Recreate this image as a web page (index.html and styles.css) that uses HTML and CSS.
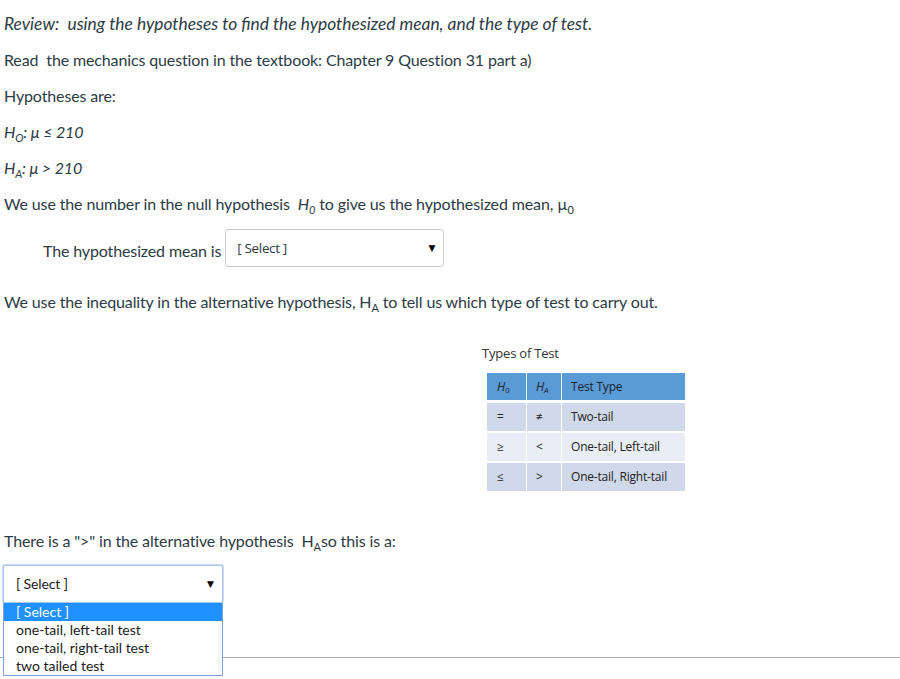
FILE: index.html
```html
<!DOCTYPE html>
<html>
<head>
<meta charset="utf-8">
<link rel="stylesheet" href="styles.css">
</head>
<body>
<div class="page">
  <p class="title">Review:&nbsp; using the hypotheses to find the hypothesized mean, and the type of test.</p>
  <p>Read&nbsp; the mechanics question in the textbook: Chapter 9 Question 31 part a)</p>
  <p>Hypotheses are:</p>
  <p class="hyp"><i>H<sub>O</sub>: μ ≤ 210</i></p>
  <p class="hyp"><i>H<sub>A</sub>: μ &gt; 210</i></p>
  <p>We use the number in the null hypothesis&nbsp; <i>H<sub>0</sub></i> to give us the hypothesized mean, µ<sub>0</sub></p>
  <p class="indent"><span class="label">The hypothesized mean is&nbsp;</span><span class="select sel1"><span class="sel-text">[ Select ]</span><span class="arrow">▼</span></span></p>
  <p class="gap">We use the inequality in the alternative hypothesis, H<sub>A</sub> to tell us which type of test to carry out.</p>
  <div class="figure">
    <div class="fig-title">Types of Test</div>
    <div class="tbl">
      <div class="row head"><div class="c1"><i>H<sub>0</sub></i></div><div class="c2"><i>H<sub>A</sub></i></div><div class="c3">Test Type</div></div>
      <div class="row dark"><div class="c1">=</div><div class="c2">≠</div><div class="c3">Two-tail</div></div>
      <div class="row light"><div class="c1">≥</div><div class="c2">&lt;</div><div class="c3">One-tail, Left-tail</div></div>
      <div class="row dark"><div class="c1">≤</div><div class="c2">&gt;</div><div class="c3">One-tail, Right-tail</div></div>
    </div>
  </div>
  <p class="q2">There is a "&gt;" in the alternative hypothesis&nbsp; H<sub>A</sub>so this is a:</p>
  <div class="sel2-wrap">
    <div class="select sel2"><span class="sel-text">[ Select ]</span><span class="arrow">▼</span></div>
    <ul class="dropdown">
      <li class="active">[ Select ]</li>
      <li>one-tail, left-tail test</li>
      <li>one-tail, right-tail test</li>
      <li>two tailed test</li>
    </ul>
  </div>
  <hr class="rule">
</div>
</body>
</html>
```
FILE: styles.css
```css
html, body {
  margin: 0;
  padding: 0;
  background: #fff;
}
.page {
  font-family: Lato, "Open Sans", sans-serif;
  font-size: 16px;
  line-height: 24px;
  letter-spacing: -0.13px;
  color: #2d3b45;
  padding: 0 4px;
  display: flow-root;
}
p {
  margin: 12px 0;
}
.title {
  font-style: italic;
  font-size: 17.4px;
  letter-spacing: 0;
}
sub {
  font-size: 11px;
  line-height: 0;
  vertical-align: -4px;
}
.indent {
  display: flex;
  align-items: center;
  padding-left: 39px;
  margin-top: 13px;
  margin-bottom: 23px;
}
.label {
  padding-top: 6px;
}
.select {
  display: inline-flex;
  align-items: center;
  justify-content: space-between;
  box-sizing: border-box;
  background: #fff;
}
.sel1 {
  width: 219px;
  height: 38px;
  border: 1px solid #c7cdd1;
  border-radius: 3px;
  padding: 0 8px 0 11px;
  font-family: "Open Sans", sans-serif;
  font-size: 13.5px;
  letter-spacing: -0.35px;
  color: #2d3b45;
}
.arrow {
  font-size: 9px;
  color: #000;
  font-family: "DejaVu Sans", sans-serif;
  letter-spacing: 0;
}
.figure {
  margin: 30px 0 0 478px;
  width: 210px;
  height: 163px;
}
.fig-title {
  font-family: "Open Sans", sans-serif;
  font-size: 13px;
  line-height: 18px;
  color: #333;
  letter-spacing: -0.2px;
}
.tbl {
  margin: 11px 0 0 5px;
  display: flex;
  flex-direction: column;
  gap: 2px;
  width: 198px;
  font-family: "Open Sans", sans-serif;
  font-size: 12px;
  letter-spacing: -0.2px;
  color: #222;
}
.row {
  display: grid;
  grid-template-columns: 39px 34px 123px;
  column-gap: 1px;
  height: 28px;
}
.row.head {
  height: 27px;
  margin-bottom: 1px;
}
.row > div {
  display: flex;
  align-items: center;
  padding-left: 10px;
}
.row .c2 { padding-left: 9px; }
.row .c3 { padding-left: 9px; }
.head > div { background: #5b9bd5; color: #1a2230; }
.dark > div { background: #d0d9ea; }
.light > div { background: #e9edf5; }
.tbl sub {
  font-size: 8px;
  vertical-align: -2px;
}
.q2 {
  margin-top: 22px;
  margin-bottom: 12px;
}
.sel2-wrap {
  position: relative;
  width: 220px;
  margin-left: -1px;
  z-index: 2;
}
.sel2 {
  width: 220px;
  height: 38px;
  border: 1px solid #a8c3ee;
  border-radius: 2px;
  box-shadow: 0 0 0 1px #c9dbf7;
  padding: 0 8px 0 12px;
  font-size: 14px;
  color: #1b1b1b;
}
.dropdown {
  position: absolute;
  left: 0;
  top: 38px;
  width: 220px;
  box-sizing: border-box;
  margin: 0;
  padding: 0;
  list-style: none;
  border: 1px solid #7b9fd6;
  border-top: none;
  background: #fff;
  font-size: 14px;
  letter-spacing: 0;
  line-height: 18px;
  color: #1b1b1b;
}
.dropdown li {
  padding-left: 12px;
  height: 18px;
}
.dropdown li.active {
  background: #1e90ff;
  color: #fff;
}
.rule {
  border: 0;
  border-top: 1px solid #aaa;
  margin: 54px -4px 21px;
}
```
